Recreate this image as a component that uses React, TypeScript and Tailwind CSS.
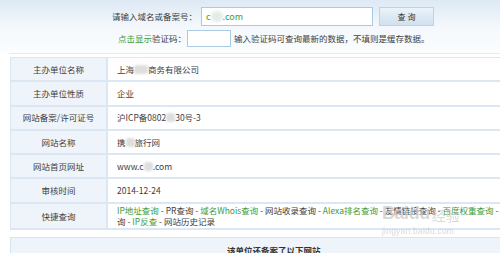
import React from "react";

const G = "text-[#3b9b3b]";

function Row({ label, children, last }: { label: string; children: React.ReactNode; last?: boolean }) {
  return (
    <div className={`flex border-b-2 border-[#dbe7f2] ${last ? "h-[26.5px]" : "h-[24.3px]"}`}>
      <div className="w-[97px] shrink-0 bg-[#eef4fa] border-r-2 border-[#dbe7f2] flex items-center justify-center">
        {label}
      </div>
      <div className="flex-1 bg-white flex items-center pl-[9px]">{children}</div>
    </div>
  );
}

function Blur({ w }: { w: number }) {
  return <span className="inline-block align-middle h-[9px] bg-[#dedede] rounded-[3px] blur-[1px]" style={{ width: w }} />;
}

export default function App() {
  return (
    <div
      className="relative w-[500px] h-[253px] overflow-hidden bg-white text-[8.5px] text-[#404040]"
      style={{ fontFamily: '"Noto Sans CJK SC", "Noto Sans", sans-serif' }}
    >
      <div className="h-[53px] bg-gradient-to-b from-[#dde9f4] via-[#f4f8fc] to-[#fbfdfe] pt-[7px]">
        <div className="flex items-center h-[19px]">
          <span className="ml-[112px] w-[86px] shrink-0 whitespace-nowrap">请输入域名或备案号：</span>
          <div className="ml-[3px] w-[172px] shrink-0 h-[19px] bg-white border border-[#a9cbe3] flex items-center pl-[4px] text-[9px] text-[#3b9b3b]">
            c<span className="inline-block w-[12px] h-[11px] rounded-full bg-[#e4ece6] blur-[1.5px]" />.com
          </div>
          <div className="ml-[6px] w-[55px] shrink-0 h-[19px] border border-[#bcd4e8] bg-gradient-to-b from-[#eaf3fa] to-[#cfe1ef] flex items-center justify-center text-[8px] text-[#333]">
            查&nbsp;询
          </div>
        </div>
        <div className="flex items-center h-[17px] mt-[4px]">
          <span className="ml-[118px] shrink-0 whitespace-nowrap">
            <span className={G}>点击显示</span>验证码：
          </span>
          <div className="ml-[1px] w-[44px] shrink-0 h-[17px] bg-white border border-[#a9cbe3]" />
          <span className="ml-[3px] whitespace-nowrap">输入验证码可查询最新的数据，不填则是缓存数据。</span>
        </div>
      </div>
      <div className="ml-[9px] h-[1px] bg-[#e3ecf4]" />
      <div className="ml-[10px] mt-[3px] w-[520px] border-t border-l border-[#dbe7f2]">
        <Row label="主办单位名称">
          上海<Blur w={14} />商务有限公司
        </Row>
        <Row label="主办单位性质">企业</Row>
        <Row label="网站备案/许可证号">
          沪ICP备0802<Blur w={9} />30号-3
        </Row>
        <Row label="网站名称">
          携<Blur w={9} />旅行网
        </Row>
        <Row label="网站首页网址">
          www.c<Blur w={9} />.com
        </Row>
        <Row label="审核时间">2014-12-24</Row>
        <Row label="快捷查询" last>
          <div className="leading-[11px] whitespace-nowrap">
            <div>
              <span className={G}>IP地址查询</span> - PR查询 - <span className={G}>域名Whois查询</span> - 网站收录查询 -{" "}
              <span className={G}>Alexa排名查询</span> - 友情链接查询 - <span className={G}>百度权重查询</span> - 反链查
            </div>
            <div>
              询 - <span className={G}>IP反查</span> - 网站历史记录
            </div>
          </div>
        </Row>
      </div>
      <div className="ml-[10px] mt-[7px] w-[520px] h-[30px] bg-[#eef4fa] border border-[#d7e5f1] pl-[216px] pt-[6px] font-bold text-[8.5px] text-[#333]">
        该单位还备案了以下网站
      </div>
      <div className="absolute left-[382px] top-[204px] text-[#c8c8c8] opacity-70 pointer-events-none">
        <div className="flex items-end leading-none">
          <span className="text-[18px] font-bold tracking-tight" style={{ fontFamily: '"Liberation Sans", sans-serif' }}>Baidu</span>
          <span className="text-[14px] ml-[2px]">经验</span>
        </div>
        <div className="text-[8.5px] mt-[3px] tracking-wide" style={{ fontFamily: '"Liberation Sans", sans-serif' }}>jingyan.baidu.com</div>
      </div>
    </div>
  );
}
